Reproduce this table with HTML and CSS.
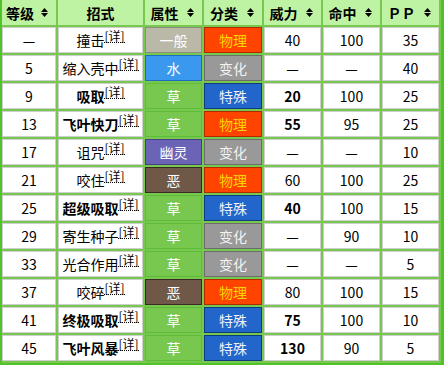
FILE: index.html
```html
<!DOCTYPE html>
<html lang="zh">
<head>
<meta charset="utf-8">
<link rel="stylesheet" href="styles.css">
</head>
<body>
<div class="frame">
  <div class="grid">
    <div class="th sort"><span class="lbl">等级</span><svg class="arr" viewBox="0 0 7 9"><path d="M0 4 L3.5 0 L7 4 Z M0 5 L3.5 9 L7 5 Z"/></svg></div>
    <div class="th"><span class="lbl">招式</span></div>
    <div class="th sort"><span class="lbl">属性</span><svg class="arr" viewBox="0 0 7 9"><path d="M0 4 L3.5 0 L7 4 Z M0 5 L3.5 9 L7 5 Z"/></svg></div>
    <div class="th sort"><span class="lbl">分类</span><svg class="arr" viewBox="0 0 7 9"><path d="M0 4 L3.5 0 L7 4 Z M0 5 L3.5 9 L7 5 Z"/></svg></div>
    <div class="th sort"><span class="lbl">威力</span><svg class="arr" viewBox="0 0 7 9"><path d="M0 4 L3.5 0 L7 4 Z M0 5 L3.5 9 L7 5 Z"/></svg></div>
    <div class="th sort"><span class="lbl">命中</span><svg class="arr" viewBox="0 0 7 9"><path d="M0 4 L3.5 0 L7 4 Z M0 5 L3.5 9 L7 5 Z"/></svg></div>
    <div class="th sort"><span class="lbl">ＰＰ</span><svg class="arr" viewBox="0 0 7 9"><path d="M0 4 L3.5 0 L7 4 Z M0 5 L3.5 9 L7 5 Z"/></svg></div>

    <div class="td">—</div><div class="td">撞击<sup class="d">[详]</sup></div><div class="ty normal">一般</div><div class="ty phys">物理</div><div class="td">40</div><div class="td">100</div><div class="td">35</div>
    <div class="td">5</div><div class="td">缩入壳中<sup class="d">[详]</sup></div><div class="ty water">水</div><div class="ty status">变化</div><div class="td">—</div><div class="td">—</div><div class="td">40</div>
    <div class="td">9</div><div class="td b">吸取<sup class="d">[详]</sup></div><div class="ty grass">草</div><div class="ty spec">特殊</div><div class="td b">20</div><div class="td">100</div><div class="td">25</div>
    <div class="td">13</div><div class="td b">飞叶快刀<sup class="d">[详]</sup></div><div class="ty grass">草</div><div class="ty phys">物理</div><div class="td b">55</div><div class="td">95</div><div class="td">25</div>
    <div class="td">17</div><div class="td">诅咒<sup class="d">[详]</sup></div><div class="ty ghost">幽灵</div><div class="ty status">变化</div><div class="td">—</div><div class="td">—</div><div class="td">10</div>
    <div class="td">21</div><div class="td">咬住<sup class="d">[详]</sup></div><div class="ty dark">恶</div><div class="ty phys">物理</div><div class="td">60</div><div class="td">100</div><div class="td">25</div>
    <div class="td">25</div><div class="td b">超级吸取<sup class="d">[详]</sup></div><div class="ty grass">草</div><div class="ty spec">特殊</div><div class="td b">40</div><div class="td">100</div><div class="td">15</div>
    <div class="td">29</div><div class="td">寄生种子<sup class="d">[详]</sup></div><div class="ty grass">草</div><div class="ty status">变化</div><div class="td">—</div><div class="td">90</div><div class="td">10</div>
    <div class="td">33</div><div class="td">光合作用<sup class="d">[详]</sup></div><div class="ty grass">草</div><div class="ty status">变化</div><div class="td">—</div><div class="td">—</div><div class="td">5</div>
    <div class="td">37</div><div class="td">咬碎<sup class="d">[详]</sup></div><div class="ty dark">恶</div><div class="ty phys">物理</div><div class="td">80</div><div class="td">100</div><div class="td">15</div>
    <div class="td">41</div><div class="td b">终极吸取<sup class="d">[详]</sup></div><div class="ty grass">草</div><div class="ty spec">特殊</div><div class="td b">75</div><div class="td">100</div><div class="td">10</div>
    <div class="td">45</div><div class="td b">飞叶风暴<sup class="d">[详]</sup></div><div class="ty grass">草</div><div class="ty spec">特殊</div><div class="td b">130</div><div class="td">90</div><div class="td">5</div>
  </div>
</div>
</body>
</html>
```
FILE: styles.css
```css
html, body { margin: 0; padding: 0; background: #fff; }
.frame {
  width: 444px;
  height: 365px;
  box-sizing: border-box;
  background: #78c850;
  border-left: 2px solid #52c22a;
  border-right: 3px solid #52c22a;
  border-bottom: 2px solid #52c22a;
  padding: 0 2px 2px 0;
  font-family: "Noto Sans CJK SC", "Noto Sans", sans-serif;
  font-size: 14px;
  color: #000;
}
.grid {
  display: grid;
  grid-template-columns: 54px 85px 57px 58px 57px 57px 57px;
  grid-template-rows: 25px;
  grid-auto-rows: 26px;
  gap: 2px;
}
.th {
  background: #bff3a4;
  font-weight: bold;
  display: flex;
  align-items: center;
  justify-content: center;
  line-height: 1;
}
.th.sort { padding-right: 8px; gap: 3px; }
.th.sort .lbl { flex: 1; text-align: center; }
.arr { width: 7px; height: 9px; fill: #000; flex: none; }
.td {
  background: #fff;
  border: 1px solid #cfcfcf;
  box-sizing: border-box;
  display: flex;
  align-items: center;
  justify-content: center;
  line-height: 1;
  white-space: nowrap;
}
.b { font-weight: bold; }
.d {
  font-size: 12px;
  font-weight: normal;
  border-bottom: 1px dotted #000;
  line-height: 1;
  align-self: flex-start;
  margin-top: 2px;
}
.ty {
  box-sizing: border-box;
  border: 1px solid;
  display: flex;
  align-items: center;
  justify-content: center;
  color: #fff;
  line-height: 1;
}
.normal { background: #bab8a6; border-color: #8e8c80; }
.water { background: #3a99ee; border-color: #1d6cc0; }
.grass { background: #78c850; border-color: #5cbd38; }
.ghost { background: #6a63b6; border-color: #453f85; }
.dark { background: #705848; border-color: #3a2b22; }
.phys { background: #ff4400; border-color: #b22a00; color: #ffd400; }
.status { background: #999999; border-color: #6c6c6c; color: #f2f2f2; }
.spec { background: #2266cc; border-color: #0f3d7c; color: #eef2fa; }
```
